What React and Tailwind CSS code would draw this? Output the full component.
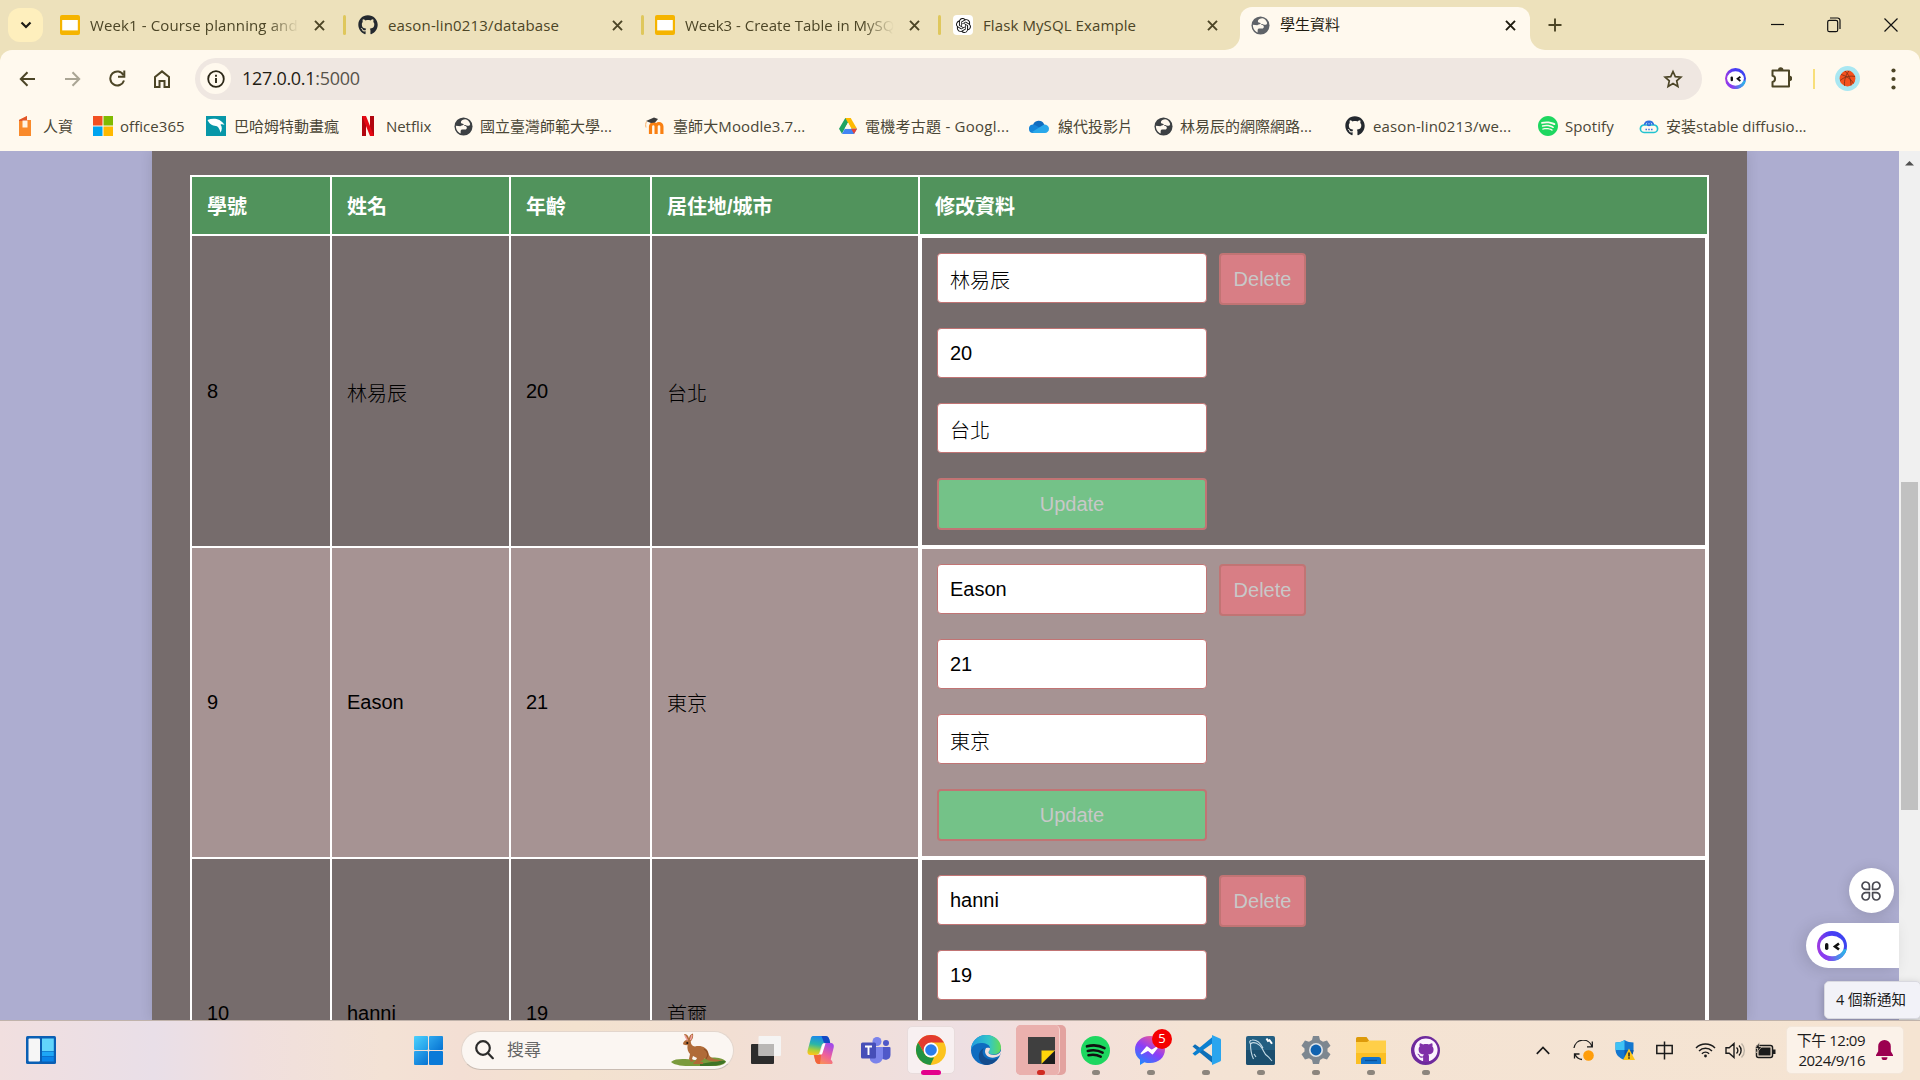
import React from "react";
import { FaGithub } from "react-icons/fa";
import { SiOpenai, SiSpotify } from "react-icons/si";

const ui = "font-['Open_Sans','Noto_Sans_CJK_TC',sans-serif]";

/* ---------- small icons ---------- */
const Slides = () => (
  <svg className="h-5 w-5 shrink-0" viewBox="0 0 20 20">
    <rect width="20" height="20" rx="2" fill="#f5b400" />
    <rect x="2.2" y="5" width="15.6" height="10.4" fill="#fff" />
  </svg>
);
const Globe = ({ c = "#5f6368" }) => (
  <svg className="h-[19px] w-[19px] shrink-0" viewBox="0 0 20 20">
    <circle cx="10" cy="10" r="9.5" fill={c} />
    <path
      d="M12 2.300C9.500 2.300 7.800 3.300 7.300 5c-.3 1.200.5 2 1.900 2 1.200 0 1.300.8.500 1.500-.8.600-2.300.4-3 1.300L2 9.200C1.800 13 4 16 7 17.300v-2.600c0-1 .8-1.600 1.900-1.600h2.600c1.400 0 2-.9 2-1.900 0-1.100-.9-1.700-2.100-1.700-.8 0-.9-.9 0-1.100 1.200-.2 1.900.9 3.300.9 1.300 0 2.200-.8 2.300-2C16.200 4.600 14.300 2.800 12 2.300z"
      fill="#fff9ee"
    />
  </svg>
);
const CloseX = ({ c = "#4c4526" }) => (
  <svg className="h-[11px] w-[11px] shrink-0" viewBox="0 0 11 11">
    <path d="M1 .8l9 9.400M10 .8l-9 9.400" stroke={c} strokeWidth="1.900" />
  </svg>
);
const BotFace = ({ className, id }) => (
  <svg className={className} viewBox="0 0 30 30">
    <defs>
      <linearGradient id={id} x1="0" y1=".6" x2="1" y2=".4">
        <stop offset="0" stopColor="#a63ae0" />
        <stop offset=".5" stopColor="#4b3cf5" />
        <stop offset="1" stopColor="#3b45f0" />
      </linearGradient>
      <linearGradient id={id + "b"} x1="0" y1="0" x2="1" y2="0">
        <stop offset=".3" stopColor="#8a3cf0" />
        <stop offset="1" stopColor="#22c3e6" />
      </linearGradient>
    </defs>
    <circle cx="15" cy="15" r="15" fill={`url(#${id})`} />
    <path d="M1.500 21.500a15 15 0 0 0 28.200-3.500z" fill={`url(#${id}b)`} />
    <ellipse cx="15" cy="15" rx="12" ry="10.300" fill="#fff" />
    <rect x="8" y="12" width="3.400" height="7" rx="1.700" fill="#111" />
    <path d="M22 12.500l-4 3 4 3" fill="none" stroke="#111" strokeWidth="2.600" />
  </svg>
);

/* ---------- tab strip ---------- */
const InactiveTab = ({ icon, title, track, fade, sep = true, width }) => (
  <div className={`flex h-[30px] items-center ${width}`}>
    {icon}
    <div
      className={`ml-[10px] w-[209px] overflow-hidden whitespace-nowrap text-[15px] leading-[24px] text-[#4c4526] ${track} ${
        fade ? "[mask-image:linear-gradient(to_right,#000_85%,transparent)]" : ""
      }`}
    >
      {title}
    </div>
    <div className="ml-[15px] flex">
      <CloseX />
    </div>
    {sep && <div className="ml-[18px] h-5 w-[3px] rounded bg-[#dfc75c]" />}
  </div>
);

const TabStrip = () => (
  <div className="flex h-[50px] bg-[#ede1bb]">
    <div className="ml-2 mt-2 flex h-[34px] w-[35px] items-center justify-center rounded-[12px] bg-[#feefbd]">
      <svg width="12" height="8" viewBox="0 0 12 8">
        <path d="M1.500 1.500L6 6l4.500-4.500" fill="none" stroke="#1c1b16" strokeWidth="2.200" />
      </svg>
    </div>
    <div className="ml-[17px] mt-[10px] flex">
      <InactiveTab width="w-[298px]" icon={<Slides />} title="Week1 - Course planning and" fade track="tracking-[0.12px]" />
      <InactiveTab width="w-[297px]" icon={<FaGithub className="h-5 w-5 shrink-0 text-[#24292f]" />} title="eason-lin0213/database" track="tracking-[0.15px]" />
      <InactiveTab width="w-[298px]" icon={<Slides />} title="Week3 - Create Table in MySQL" fade track="tracking-[0px]" />
      <InactiveTab
        width="w-[272px]"
        sep={false}
        icon={
          <div className="flex h-5 w-5 shrink-0 items-center justify-center rounded bg-white">
            <SiOpenai className="h-[15px] w-[15px] text-[#111]" />
          </div>
        }
        title="Flask MySQL Example"
        track="tracking-[0.1px]"
      />
    </div>
    <div className="h-[50px] w-[15px] self-end bg-[#fff9ee]">
      <div className="h-full w-full rounded-br-[15px] bg-[#ede1bb]" />
    </div>
    <div className="mt-[7px] flex h-[43px] w-[290px] items-center rounded-t-[12px] bg-[#fff9ee] pb-[7px] pl-[11px] pt-[-1px]">
      <Globe />
      <div className="ml-[10px] w-[225px] text-[15px] text-[#1f1c10] mb-px">學生資料</div>
      <CloseX c="#1f1c10" />
    </div>
    <div className="h-[50px] w-[15px] bg-[#fff9ee]">
      <div className="h-full w-full rounded-bl-[15px] bg-[#ede1bb]" />
    </div>
    <svg className="ml-[3px] mt-[18px] h-[14px] w-[14px]" viewBox="0 0 14 14">
      <path d="M7 .5v13M.5 7h13" stroke="#4c4526" strokeWidth="1.900" />
    </svg>
    <div className="ml-auto mr-[22px] flex h-[50px] items-center">
      <svg width="13" height="14" viewBox="0 0 13 14">
        <path d="M0 6.500h13" stroke="#111" strokeWidth="1.200" />
      </svg>
      <svg className="ml-[43px]" width="14" height="16" viewBox="0 0 14 16" fill="none" stroke="#111" strokeWidth="1.200">
        <rect x=".7" y="3.300" width="10" height="11.400" rx="1.800" />
        <path d="M3 1h7.500a2.500 2.500 0 0 1 2.500 2.500v8.500" />
      </svg>
      <svg className="ml-[43px]" width="14" height="14" viewBox="0 0 14 14">
        <path d="M.5.500l13 13M13.500.500l-13 13" stroke="#111" strokeWidth="1.200" />
      </svg>
    </div>
  </div>
);

/* ---------- toolbar ---------- */
const Toolbar = () => (
  <div className="h-[51px] bg-[#ede1bb]">
    <div className="flex h-full items-center rounded-t-[12px] bg-[#fff9ee] pt-[6px] text-[#4c4526]">
      <svg className="ml-[19px]" width="17" height="16" viewBox="0 0 17 16" fill="none" stroke="#4c4526" strokeWidth="2">
        <path d="M16 8H2M8.500 1.200L1.800 8l6.700 6.800" />
      </svg>
      <svg className="ml-[28px]" width="17" height="16" viewBox="0 0 17 16" fill="none" stroke="#aaa594" strokeWidth="2">
        <path d="M1 8h14M8.500 1.200L15.200 8l-6.700 6.800" />
      </svg>
      <svg className="ml-[28px]" width="17" height="17" viewBox="0 0 17 17" fill="none" stroke="#4c4526" strokeWidth="2">
        <path d="M14.500 5.200A7 7 0 1 0 15 10.500" />
        <path d="M15.300.500v6.200H9" />
      </svg>
      <svg className="ml-[28px]" width="16" height="18" viewBox="0 0 16 18" fill="none" stroke="#4c4526" strokeWidth="2">
        <path d="M1 7L8 1.400 15 7v10h-4.500v-6h-5v6H1z" />
      </svg>
      <div className="ml-[25px] flex h-[42px] w-[1507px] items-center rounded-full bg-[#efe7e1] pl-[5px]">
        <div className="flex h-[31px] w-[31px] items-center justify-center rounded-full bg-[#fff9ee]">
          <svg width="18" height="18" viewBox="0 0 18 18">
            <circle cx="9" cy="9" r="7.800" fill="none" stroke="#2b2717" strokeWidth="1.800" />
            <path d="M9 8v5M9 4.800v1.900" stroke="#2b2717" strokeWidth="1.900" />
          </svg>
        </div>
        <div className="ml-[11px] text-[18px] tracking-[-0.3px] text-[#1f1c14]">
          127.0.0.1<span className="text-[#57534a]">:5000</span>
        </div>
        <svg className="ml-auto mr-[19px]" width="20" height="20" viewBox="0 0 20 20" fill="none" stroke="#4c4526" strokeWidth="1.700">
          <path d="M10 2.500l2.300 5.100 5.600.6-4.200 3.700 1.200 5.500-4.900-2.900-4.900 2.900 1.200-5.500-4.200-3.700 5.600-.6z" />
        </svg>
      </div>
      <BotFace id="g1" className="ml-[23px] h-[21px] w-[21px]" />
      <svg className="ml-[24px] mb-[3px]" width="22" height="21" viewBox="0 0 22 21">
        <path d="M2.500 3.500h16.500v16H2.500v-4.600c3.400-.4 3.400-5.800 0-6.200z" fill="none" stroke="#4c4526" strokeWidth="2" strokeLinejoin="round" />
        <path d="M8 3a2.700 2.700 0 0 1 5.400 0zM19.500 8.800a2.700 2.700 0 0 1 0 5.400z" fill="#4c4526" />
      </svg>
      <div className="ml-[21px] h-5 w-[2px] bg-[#f8df7a]" />
      <svg className="ml-[20px]" width="25" height="25" viewBox="0 0 25 25">
        <circle cx="12.500" cy="12.500" r="12.500" fill="#a9e7f2" />
        <circle cx="12.500" cy="12.500" r="7.900" fill="#f4511e" />
        <path d="M5 14.500c5-4 10-5 15-4M10 5c4 4 6 8 6 14.500M6 8.500c4 1 10 4 12.500 9M14 4.800c-3 4-5 9-4.500 15" fill="none" stroke="#7a3115" strokeWidth=".8" />
      </svg>
      <svg className="ml-[31px]" width="5" height="22" viewBox="0 0 5 22" fill="#4c4526">
        <circle cx="2.500" cy="2.500" r="2.100" />
        <circle cx="2.500" cy="11" r="2.100" />
        <circle cx="2.500" cy="19.500" r="2.100" />
      </svg>
    </div>
  </div>
);

/* ---------- bookmarks ---------- */
const Mark = ({ icon, label, width, track = "", gap = "gap-[8px]" }) => (
  <div className={`flex shrink-0 items-center ${gap} ${width}`}>
    <div className="flex h-5 w-5 shrink-0 items-center justify-center">{icon}</div>
    <div className={`whitespace-nowrap text-[15px] leading-5 text-[#4a4636] ${track}`}>{label}</div>
  </div>
);

const Bookmarks = () => (
  <div className="flex h-[50px] items-center bg-[#fff9ee] pl-[15px]">
    <Mark width="w-[78px]" label="人資" icon={
      <svg width="14" height="20" viewBox="0 0 14 20">
        <path d="M1 4L9 0v4h4v16H1z" fill="#f98a2b" />
        <path d="M1 4L9 0v5H1z" fill="#e2552a" />
        <path d="M4.500 4.500h5v7h-5z" fill="#fff3e2" />
      </svg>
    } />
    <Mark width="w-[113px]" gap="gap-[7px]" track="tracking-[0.05px]" label="office365" icon={
      <svg width="20" height="20" viewBox="0 0 20 20">
        <path d="M0 0h9.500v9.500H0z" fill="#f25022" /><path d="M10.500 0H20v9.500h-9.500z" fill="#7fba00" />
        <path d="M0 10.500h9.500V20H0z" fill="#00a4ef" /><path d="M10.500 10.500H20V20h-9.500z" fill="#ffb900" />
      </svg>
    } />
    <Mark width="w-[152px]" label="巴哈姆特動畫瘋" icon={
      <svg width="20" height="20" viewBox="0 0 20 20">
        <path d="M0 0h20v20H0z" fill="#0797a8" />
        <path d="M1.500 4C7 2 14 2 18.500 9c-1.500-.8-3-1-4-.3 2 2.300 1.500 5.300 0 8-.4-2.500-1.500-5-3.500-6.500C8 9.500 4 9.500 1.500 4z" fill="#fff" />
      </svg>
    } />
    <Mark width="w-[95px]" track="tracking-[-0.05px]" label="Netflix" icon={
      <svg width="12" height="20" viewBox="0 0 12 20">
        <path d="M0 0h4v20H0zM8 0h4v20H8z" fill="#b1060f" /><path d="M0 0h4l8 20H8z" fill="#e50914" />
      </svg>
    } />
    <Mark width="w-[192px]" gap="gap-[7px]" label="國立臺灣師範大學..." icon={<Globe c="#3c4043" />} />
    <Mark width="w-[194px]" track="tracking-[0.1px]" label="臺師大Moodle3.7..." icon={
      <svg width="20" height="18" viewBox="0 0 20 18">
        <path d="M5.500 17V9.500a2.800 2.800 0 0 1 5.600 0V17M11.100 9.500a2.900 2.900 0 0 1 5.800 0V17" fill="none" stroke="#f98012" strokeWidth="3.200" />
        <path d="M1 4l8-3.500 4 1.500-3 3.500-4 .5z" fill="#3b3b3b" /><path d="M1.500 4.500c-1 2-1 4-.5 6" fill="none" stroke="#f9b26b" />
      </svg>
    } />
    <Mark width="w-[190px]" gap="gap-[6px]" track="tracking-[0.25px]" label="電機考古題 - Googl..." icon={
      <svg className="mr-[2px]" width="18" height="18" viewBox="0 0 20 18">
        <path d="M7 0h6L6.500 11.500 3.300 17.500 0 12z" fill="#1ea362" /><path d="M7 0h6l7 12h-6.300z" fill="#ffba00" />
        <path d="M6.500 12H20l-3.300 6H3.300z" fill="#4285f4" /><path d="M13.500 12H20l-3.300 6z" fill="#ea4335" />
        <path d="M10 5.200L13.700 12H6.300z" fill="#fff9ee" />
      </svg>
    } />
    <Mark width="w-[124px]" gap="gap-[9px]" label="線代投影片" icon={
      <svg width="20" height="13" viewBox="0 0 20 13">
        <path d="M4 5a6 6 0 0 1 11-1l1 3-9 4z" fill="#0f6cbf" /><path d="M0 9a4 4 0 0 1 6-4l7 4-6 4H4a4 4 0 0 1-4-4z" fill="#1484d8" />
        <path d="M3 12l12-7.500c3 0 5 1.800 5 4.300S18 13 16 13H5z" fill="#29a8ea" />
      </svg>
    } />
    <Mark width="w-[192px]" gap="gap-[7px]" label="林易辰的網際網路..." icon={<Globe c="#3c4043" />} />
    <Mark width="w-[193px]" track="tracking-[0.15px]" label="eason-lin0213/we..." icon={<FaGithub className="h-5 w-5 text-[#24292f]" />} />
    <Mark width="w-[101px]" gap="gap-[7px]" track="tracking-[0.1px]" label="Spotify" icon={<SiSpotify className="h-5 w-5 text-[#1ed760]" />} />
    <Mark width="w-[200px]" gap="gap-[7px]" track="tracking-[0.02px]" label="安装stable diffusio..." icon={
      <svg width="20" height="16" viewBox="0 0 20 16" fill="none" strokeWidth="1.700">
        <path d="M5 14.500a3.700 3.700 0 0 1 .3-7.500h9.400a3.700 3.700 0 0 1 .3 7.500z" stroke="#22c3d0" />
        <path d="M5.500 7a4.600 4.600 0 0 1 9 0" stroke="#2f6fe0" /><circle cx="10" cy="6" r="1.500" stroke="#2f6fe0" />
        <path d="M6.500 11.500h1.400M9.300 11.500h1.400M12.100 11.500h1.400" stroke="#2f6fe0" />
      </svg>
    } />
  </div>
);

/* ---------- page ---------- */
const rows = [
  { id: "8", name: "林易辰", age: "20", city: "台北", alt: false },
  { id: "9", name: "Eason", age: "21", city: "東京", alt: true },
  { id: "10", name: "hanni", age: "19", city: "首爾", alt: false },
];

const Value = ({ children }) =>
  /[^\x00-\x7f]/.test(children) ? (
    <span className="pt-[3px] font-['Noto_Sans_CJK_TC_Light','Noto_Sans_CJK_TC',sans-serif] font-light leading-6">{children}</span>
  ) : (
    <span className="leading-6">{children}</span>
  );

const Field = ({ value }) => (
  <div className="flex h-[50px] w-[270px] items-center rounded-[4px] border border-[#c17474] bg-white pl-3">
    <Value>{value}</Value>
  </div>
);

const Row = ({ r, first }) => {
  const cell = `flex items-center border-b border-l-2 border-white pl-[15px] ${first ? "" : "border-t pb-[2px]"}`;
  return (
    <div className={`grid h-[311px] shrink-0 grid-cols-[140px_179px_141px_268px_791px] ${r.alt ? "bg-[#a69393]" : "bg-[#766c6c]"}`}>
      <div className={cell}><Value>{r.id}</Value></div>
      <div className={cell}><Value>{r.name}</Value></div>
      <div className={cell}><Value>{r.age}</Value></div>
      <div className={cell}><Value>{r.city}</Value></div>
      <div className="flex items-start gap-3 border-x-4 border-y-2 border-white p-[15px]">
        <div className="flex flex-col gap-[25px]">
          <Field value={r.name} />
          <Field value={r.age} />
          <Field value={r.city} />
          <button className="h-[52px] w-[270px] rounded-[4px] border-2 border-[#c17474] bg-[#74c288] text-[#c8c8c8]">Update</button>
        </div>
        <button className="h-[52px] w-[87px] rounded-[4px] border-2 border-[#c17474] bg-[#d87e85] text-[#c8c8c8]">Delete</button>
      </div>
    </div>
  );
};

const Page = () => (
  <div className="relative flex h-[869px] overflow-hidden bg-[#adadd0] font-['Liberation_Sans','Noto_Sans_CJK_TC',sans-serif] text-[20px] text-black">
    <div className="ml-[152px] h-[869px] w-[1595px] overflow-hidden bg-[#766c6c] pl-[38px] pt-6 shadow-[0_0_12px_rgba(0,0,0,0.12)]">
      <div className="flex w-[1519px] flex-col">
        <div className="grid h-[61px] shrink-0 grid-cols-[140px_179px_141px_268px_791px] border-y-2 border-white bg-[#51935c] font-bold text-white">
          {["學號", "姓名", "年齡", "居住地/城市", "修改資料"].map((h) => (
            <div key={h} className="flex items-center border-l-2 border-white pl-[15px] pt-[2px] last:border-r-2">
              {h}
            </div>
          ))}
        </div>
        {rows.map((r, i) => (
          <Row key={r.id} r={r} first={i === 0} />
        ))}
      </div>
    </div>
    <div className="ml-auto h-full w-[21px] bg-[#f0f0f0] pl-[2px] pt-2">
      <svg className="ml-[2px]" width="13" height="8" viewBox="0 0 13 8">
        <path d="M2 6.500L6.500 2 11 6.500z" fill="#505050" />
      </svg>
      <div className="mt-[315px] h-[328px] w-[17px] bg-[#c1c1c1]" />
    </div>
    <div className="absolute left-[1849px] top-[717px] flex h-[45px] w-[45px] items-center justify-center rounded-full bg-white shadow-[0_2px_14px_rgba(0,0,0,0.15)]">
      <svg className="mr-px mt-px" width="20" height="20" viewBox="0 0 20 20" fill="none" stroke="#4a4a52" strokeWidth="1.700" strokeLinejoin="round">
        <path d="M8.400 8.400H4.900A3.700 3.700 0 1 1 8.400 4.900zM11.600 8.400V4.900a3.700 3.700 0 1 1 3.500 3.500zM8.400 11.600v3.500a3.700 3.700 0 1 1-3.500-3.500zM11.600 11.600h3.500a3.700 3.700 0 1 1-3.500 3.500z" />
      </svg>
    </div>
    <div className="absolute left-[1806px] top-[772px] flex h-[45px] w-[93px] items-center rounded-l-full bg-white pl-[11px] shadow-[-4px_2px_16px_rgba(0,0,0,0.12)]">
      <BotFace id="g2" className="h-[30px] w-[30px]" />
    </div>
    <div className={`absolute left-[1824px] top-[830px] flex h-[38px] w-[97px] items-center justify-center rounded-[5px] border border-[#d9d9e0] bg-[#f2f2f8] pr-[3px] text-[14.5px] text-[#1b1b1b] shadow-[0_3px_8px_rgba(0,0,0,0.25)] ${ui}`}>
      4 個新通知
    </div>
  </div>
);

/* ---------- taskbar ---------- */
const App55 = ({ children, bar = "bg-[#8c857d] w-2", box = "" }) => (
  <div className={`relative flex h-[48px] w-[55px] shrink-0 items-center justify-center ${box}`}>
    {children}
    <div className={`absolute bottom-[-1px] h-[5px] rounded-full ${bar}`} />
  </div>
);

const Taskbar = () => (
  <div className="flex h-[60px] items-center border-t border-[#c0b3ab] bg-[linear-gradient(90deg,#f1dfdf_0%,#e9dfe8_8%,#f0dfde_13%,#f3e2d5_20%,#f3dfd4_24%,#f3e2cf_30%,#f2dfd3_38%,#f0dfdc_46%,#eedfe2_50%,#f3dfdc_54%,#f4e3d4_62%,#f5e4d2_100%)] pb-px">
    <svg className="ml-[26px]" width="30" height="28" viewBox="0 0 30 28">
      <rect width="30" height="28" rx="1.500" fill="#0a5fb4" />
      <rect x="2.500" y="2.500" width="11.500" height="23" rx="1" fill="#f6f6f6" />
      <rect x="16" y="2.500" width="11.800" height="12.500" fill="#62d5fb" />
      <rect x="16" y="15.500" width="11.800" height="4.500" fill="#1ea7f6" />
      <rect x="16" y="20.500" width="11.800" height="5" fill="#0a84e8" />
    </svg>
    <svg className="ml-[358px]" width="29" height="29" viewBox="0 0 29 29">
      <defs>
        <linearGradient id="win" x1="0" y1="0" x2="1" y2="1">
          <stop offset="0" stopColor="#4bd0fc" /><stop offset="1" stopColor="#1f9be8" />
        </linearGradient>
        <linearGradient id="win2" x1="0" y1="0" x2="1" y2="1">
          <stop offset="0" stopColor="#2fa8ee" /><stop offset="1" stopColor="#0673d2" />
        </linearGradient>
      </defs>
      <rect width="14" height="14" rx="1" fill="url(#win)" /><rect x="15" width="14" height="14" rx="1" fill="url(#win2)" />
      <rect y="15" width="14" height="14" rx="1" fill="url(#win2)" /><rect x="15" y="15" width="14" height="14" rx="1" fill="#0a7ad8" />
    </svg>
    <div className="ml-[18px] flex h-[39px] w-[273px] items-center rounded-full border border-[#e3d6cd] border-b-[#c9bcb3] bg-[#fbf6f2] pl-[13px]">
      <svg width="19" height="20" viewBox="0 0 19 20" fill="none" stroke="#2b2b2b" strokeWidth="2.200">
        <circle cx="8" cy="8" r="6.800" /><path d="M12.800 13l5 5.200" strokeLinecap="round" />
      </svg>
      <div className={`ml-[13px] text-[17px] text-[#666] ${ui}`}>搜尋</div>
      <svg className="ml-auto mr-[6px]" width="57" height="34" viewBox="0 0 57 34">
        <path d="M1 29c5-4 14-3 24-2 12-3 27-4 31 2-4 5-13 4-24 4-12 0-25 1-31-4z" fill="#7a9a3c" />
        <path d="M30 31c9-1 18-4 26-3-3 5-14 5-26 5z" fill="#3f7426" />
        <path d="M13 11c0-2 2-4 4-4l-3-6c3 0 4.500 2 5 4.500.3-2.500 1.500-4.500 4-5 .6 3-.3 6-2.300 8 .3 3 1.500 4.500 4.300 5 6-1.500 12.500 1 13.500 7 1 4 5 6.500 14 6.500-8 3-15 1-18-2-1 2-3 3-4.500 4h3v2H23l1-2c1-1 2.500-2 3-4l-4-2-1 3 2 2-3 1-2-3 1-5c-2-2-3-5-2.500-9-2 .5-4-.3-5-1.500z" fill="#b06b38" />
        <path d="M15 2.500l2.500 5M22 2l-1.500 5" stroke="#f0a0a0" strokeWidth="1.500" />
        <path d="M34 16c4 2 5 6 2 10" fill="none" stroke="#8d4f25" strokeWidth="1.200" />
        <circle cx="17.300" cy="10" r="1.100" fill="#1b120c" />
      </svg>
    </div>
    <div className="ml-[4px] flex">
      <App55 bar="">
        <svg width="30" height="28" viewBox="0 0 30 28">
          <rect y="8" width="23" height="20" rx="1" fill="#2c2c2c" />
          <rect x="7.500" width="22.500" height="20" rx="1" fill="#f5f5f5" fillOpacity=".92" />
          <path d="M7.500 8h15.500v12H7.500z" fill="#b9b7b5" />
        </svg>
      </App55>
      <App55 bar="">
        <svg className="ml-[2px]" width="30" height="28" viewBox="0 0 30 28">
          <defs>
            <linearGradient id="cpa" x1=".5" y1="0" x2=".3" y2="1">
              <stop offset="0" stopColor="#1a86ee" /><stop offset=".45" stopColor="#2ab6a8" /><stop offset=".75" stopColor="#a9cf3a" /><stop offset="1" stopColor="#ffc51a" />
            </linearGradient>
            <linearGradient id="cpb" x1=".7" y1="0" x2=".2" y2="1">
              <stop offset="0" stopColor="#a34be8" /><stop offset=".5" stopColor="#f0609a" /><stop offset="1" stopColor="#fb9a4b" />
            </linearGradient>
          </defs>
          <path d="M6 0h12.500c2 0 3 1 3.700 3l1 4H18c-2 0-3 1-3.600 3l-1.800 6c-.6 2-1.600 3-3.600 3H3.500C1 19 0 17 .6 14.500l3-11C4 1.500 4.500 0 6 0z" fill="url(#cpa)" />
          <path d="M14.500 0h4c2 0 3 1 3.700 3l1 4H18c-1 0-1.500-1-1.800-2.500z" fill="#1348c4" />
          <path d="M24 28H12c-2 0-3-1-3.700-3l-1.600-6h4c2 0 3-1 3.600-3l1.900-6c.6-2 1.600-3 3.600-3h3.500c3 0 4 2 3.400 4.500l-3 12C26.500 26.500 26 28 24 28z" fill="url(#cpb)" />
          <path d="M7 19h4c2 0 3-.8 3.600-3L13 28h-1c-2 0-3-1-3.700-3z" fill="#f2643c" />
          <path d="M13 17l2.700-8.500c.2-.7.8-1 1.500-1h1.300L15.500 17c-.3 1-.8 1.500-1.500 1.500h-1.500z" fill="#fff" />
        </svg>
      </App55>
      <App55 bar="">
        <svg className="ml-px" width="30" height="27" viewBox="0 0 30 27">
          <circle cx="16" cy="4.500" r="4.500" fill="#7b83eb" /><circle cx="25" cy="6" r="3" fill="#5059c9" />
          <path d="M20 10h8.500a1 1 0 0 1 1 1v7a5 5 0 0 1-9.500 2z" fill="#5059c9" />
          <path d="M9 10h13v10a7 7 0 0 1-13 3z" fill="#7b83eb" />
          <rect y="5.500" width="15" height="16" rx="1.500" fill="#464eb8" />
          <path d="M4 9.500h7M7.500 9.500v8.500" stroke="#fff" strokeWidth="1.900" />
        </svg>
      </App55>
      <App55 bar="bg-[#e3008c] w-5">
        <div className="flex h-[48px] w-[48px] items-center justify-center rounded-[5px] border border-[#e8dcdc] bg-[#f8f0f1]">
          <svg width="30" height="30" viewBox="0 0 30 30">
            <circle cx="15" cy="15" r="15" fill="#fcc31e" />
            <path d="M2 7.500A15 15 0 0 1 28 7.500H15l-6.500 11.200z" fill="#e33b2e" />
            <path d="M2 7.500l6.500 11.300a7.500 7.500 0 0 0 6.500 3.700h3L14.500 30A15 15 0 0 1 2 7.500z" fill="#229342" />
            <circle cx="15" cy="15" r="7.400" fill="#fff" /><circle cx="15" cy="15" r="5.800" fill="#2b7de9" />
          </svg>
        </div>
      </App55>
      <App55 bar="">
        <svg width="30" height="30" viewBox="0 0 30 30">
          <defs>
            <linearGradient id="ed" x1="0" y1=".3" x2="1" y2=".3"><stop offset="0" stopColor="#1f9ae0" /><stop offset=".6" stopColor="#33c6c8" /><stop offset="1" stopColor="#63dc55" /></linearGradient>
          </defs>
          <circle cx="15" cy="15" r="15" fill="#0f6cc0" />
          <path d="M0 15C0 7 6 0 15 0s15 6 15 12.500c0 4.500-3.500 7-7.500 7-3 0-5-1-5-2.500 0-1 1.500-2 1.500-4C19 10 15 8 10 8 5 8 1 11 0 15z" fill="url(#ed)" />
          <path d="M13 13c-3 4-1 9 4 11 4 1.500 8 .5 10.500-1.500C25 27.500 20 30 15 30 9 29 7 23 8 19c.6-3 3-5 5-6z" fill="#134c8e" />
          <path d="M28.500 20.500c-3 2-7 3-10.500 1.500-4-2-5-5.500-3-9 2-.5 4-.5 4 .5 0 2-1.500 2.500-1.500 3.800 0 1.700 2.500 2.700 5.500 2.700 3 0 5.500-1.200 7-4 .3 2-.5 3.500-1.500 4.500z" fill="#f1dfdd" />
        </svg>
      </App55>
      <App55 bar="bg-[#d02b22] w-2">
        <div className="absolute left-[3px] top-[-1px] h-[50px] w-[50px] rounded-[5px] bg-[#e3a3a0]" />
        <div className="absolute left-[3px] top-[-1px] h-[50px] w-[44px] rounded-[5px] border-r border-[#f5d5d2] bg-[#eab0ad]" />
        <svg className="relative ml-px" width="27" height="27" viewBox="0 0 27 27">
          <path d="M0 0h27v13L13.500 27H0z" fill="#3f3f3f" /><path d="M13.500 13.500H27L13.500 27z" fill="#ffd60a" /><path d="M27 13.500V27H13.500z" fill="#1c1c1c" />
        </svg>
      </App55>
      <App55>
        <svg width="29" height="29" viewBox="0 0 29 29">
          <circle cx="14.500" cy="14.500" r="14.500" fill="#1ed760" />
          <path d="M6 10.300c6-1.600 12.500-1 17.500 1.800M6.800 15c5-1.300 10.500-.7 14.800 1.600M7.500 19.300c4.300-1 8.600-.5 12.200 1.400" fill="none" stroke="#111" strokeWidth="2.600" strokeLinecap="round" />
        </svg>
      </App55>
      <App55>
        <svg width="31" height="30" viewBox="0 0 31 30">
          <defs>
            <linearGradient id="ms" x1=".2" y1="1" x2=".8" y2="0"><stop offset="0" stopColor="#1a8cff" /><stop offset=".5" stopColor="#8b3df8" /><stop offset="1" stopColor="#ff5c87" /></linearGradient>
          </defs>
          <path d="M15 1C6.500 1 0 7 0 14.500c0 4.500 2 8 5 10.300V30l4.500-2.700c2 .6 3.500.8 5.500.8 8.500 0 15-6 15-13.600S23.500 1 15 1z" fill="url(#ms)" />
          <path d="M6.500 18.500l5.500-6.500 4.500 3.600 6.500-4-5.500 7-4.500-3.600z" fill="#fff" stroke="#fff" strokeWidth="1.600" strokeLinejoin="round" />
        </svg>
        <div className="absolute left-[29px] top-[3px] flex h-5 w-5 items-center justify-center rounded-full bg-[#f50000] font-['Open_Sans',sans-serif] text-[13px] text-white">5</div>
      </App55>
      <App55>
        <svg width="30" height="30" viewBox="0 0 30 30">
          <path d="M1.500 11.500L4 9.300 22 22v6.500z" fill="#0d6fb8" /><path d="M1.500 18.500L4 20.700 22 8V1.500z" fill="#0a7fd0" />
          <path d="M21 0l8 3.500a1.500 1.500 0 0 1 1 1.400v20.200a1.500 1.500 0 0 1-1 1.400L21 30z" fill="#2aa5ee" />
        </svg>
      </App55>
      <App55>
        <svg width="29" height="29" viewBox="0 0 29 29">
          <rect width="29" height="29" rx="2" fill="#235f82" />
          <path d="M0 14h29v13a2 2 0 0 1-2 2H2a2 2 0 0 1-2-2z" fill="#1b4e6e" />
          <path d="M7.500 23c-2-4-3-9-3-15 3-3 9-.5 12 5 1.500 3 2 6 6 8l3.500 4M4.500 8C3 6 4 4 6 4c5-.5 9 4 11 8M8 18l2 3" fill="none" stroke="#c5dbe6" strokeWidth="1.100" />
          <path d="M20.500 2.500l1.500 2.500 1.500-.8 2.500 3.600" stroke="#fff" strokeWidth="2" fill="none" />
        </svg>
      </App55>
      <App55>
        <svg width="30" height="28" viewBox="0 0 30 28">
          <path d="M12 0h6l1 4 3 1.700L26 4.500l3.500 5.200-3 2.800v3l3 2.800-3.500 5.200-4-1.200-3 1.700-1 4h-6l-1-4-3-1.700-4 1.200-3.500-5.200 3-2.800v-3l-3-2.800L4 4.500l4 1.200L11 4z" fill="#7d8790" />
          <circle cx="15" cy="14" r="7" fill="#dfe4e8" /><circle cx="15" cy="14" r="5.400" fill="#0f62b0" />
        </svg>
      </App55>
      <App55>
        <svg width="30" height="27" viewBox="0 0 30 27">
          <path d="M0 1.500A1.500 1.500 0 0 1 1.500 0h9L13 3.500V8H0z" fill="#dd9a0a" />
          <path d="M0 5h11l2-1.500h17V27H0z" fill="#ffcf48" /><path d="M0 16h30v11H0z" fill="#fbbf24" />
          <path d="M5 27v-4.500A2.500 2.500 0 0 1 7.500 20h15a2.500 2.500 0 0 1 2.500 2.500V27z" fill="#1173cc" /><path d="M9 23.500h12" stroke="#0a4f96" strokeWidth="1.300" />
        </svg>
      </App55>
      <App55>
        <div className="flex h-[29px] w-[29px] items-center justify-center rounded-full bg-[#6d2a9c]">
          <FaGithub className="h-[24px] w-[24px] rounded-full bg-[#7f2fa8] text-[#fbf4fd]" />
        </div>
      </App55>
    </div>
    <div className="ml-auto flex items-center">
      <svg width="14" height="9" viewBox="0 0 14 9" fill="none" stroke="#1b1b1b" strokeWidth="1.700"><path d="M.8 7.800L7 1.500l6.200 6.300" /></svg>
      <svg className="ml-[23px]" width="21" height="21" viewBox="0 0 21 21" fill="none" stroke="#1b1b1b" strokeWidth="1.300">
        <path d="M1 8a9.300 9.300 0 0 1 18-1.500M19.300 1.500v5.300H14M1.500 18.500v-4.500h5M2 14.500a9 9 0 0 0 7 5" /><circle cx="15.500" cy="15.500" r="5.300" fill="#ff9d0a" stroke="none" />
      </svg>
      <svg className="ml-[21px]" width="20" height="21" viewBox="0 0 20 21">
        <path d="M9.500 0c3 1.800 6 2.500 9 2.500v7c0 5-3.500 8.500-9 10.500C4 18 .5 14.500.5 9.500v-7C4 2.500 7 1.800 9.500 0z" fill="#1377cf" />
        <path d="M9.500 0v10H.5V2.500C4 2.500 7 1.800 9.500 0z" fill="#3fc3f5" /><path d="M9.500 10h9c0 5-3.500 8-9 10z" fill="#0b58ae" />
        <path d="M14 8.500L20 20H8z" fill="#fcc419" /><path d="M14 12.500v4M14 17.300v1.400" stroke="#222" strokeWidth="1.500" />
      </svg>
      <svg className="ml-[21px]" width="17" height="19" viewBox="0 0 17 19" fill="none" stroke="#1b1b1b" strokeWidth="1.500"><path d="M.8 4.500h15.400v8H.8zM8.500.500v18" /></svg>
      <svg className="ml-[22px]" width="21" height="16" viewBox="0 0 21 16" fill="none" stroke="#1b1b1b" strokeWidth="1.500">
        <path d="M1 6a13.500 13.500 0 0 1 19 0M4 9a9.300 9.300 0 0 1 13 0M6.900 11.800a5.200 5.200 0 0 1 7.200 0" /><circle cx="10.500" cy="14" r="1.400" fill="#1b1b1b" stroke="none" />
      </svg>
      <svg className="ml-[9px]" width="21" height="17" viewBox="0 0 21 17" fill="none" stroke="#1b1b1b" strokeWidth="1.400">
        <path d="M1 5.700h3.200L9 1.500v14l-4.800-4.200H1zM11.500 5.500a4 4 0 0 1 0 6M14 3.500a7 7 0 0 1 0 10" /><path d="M16.500 1.500a10 10 0 0 1 0 14" stroke="#bdb3a6" />
      </svg>
      <svg className="ml-[9px]" width="21" height="17" viewBox="0 0 21 17">
        <rect x="1.500" y="3.500" width="16" height="12" rx="2" fill="none" stroke="#1b1b1b" strokeWidth="1.500" />
        <path d="M3.500 5.500h12v8h-12zM18 7.500h2.500v4.500H18z" fill="#1b1b1b" /><path d="M4.500 0L0 6.500h3L1.500 11 7 4.500H4z" fill="#1b1b1b" stroke="#f5e4d2" strokeWidth=".6" />
      </svg>
      <div className={`ml-[10px] mr-4 flex h-[48px] w-[118px] items-center rounded-[5px] border border-[#f3e6d9] bg-[#fbf2e9] text-[#1b1b1b] ${ui}`}>
        <div className="ml-[8px] w-[70px] whitespace-nowrap text-right text-[15px] leading-[20px] tracking-[-0.5px]">
          <div>下午 12:09</div>
          <div>2024/9/16</div>
        </div>
        <svg className="ml-[11px]" width="17" height="20" viewBox="0 0 17 20" fill="#9b0050">
          <path d="M8.500 0a6.300 6.300 0 0 1 6.300 6.300v5L17 15v1H0v-1l2.200-3.700v-5A6.300 6.300 0 0 1 8.500 0zM5.500 17.300h6a3 3 0 0 1-6 0z" />
        </svg>
      </div>
    </div>
  </div>
);

export default function App() {
  return (
    <div className={`h-[1080px] w-[1920px] overflow-hidden ${ui}`}>
      <TabStrip />
      <Toolbar />
      <Bookmarks />
      <Page />
      <Taskbar />
    </div>
  );
}
